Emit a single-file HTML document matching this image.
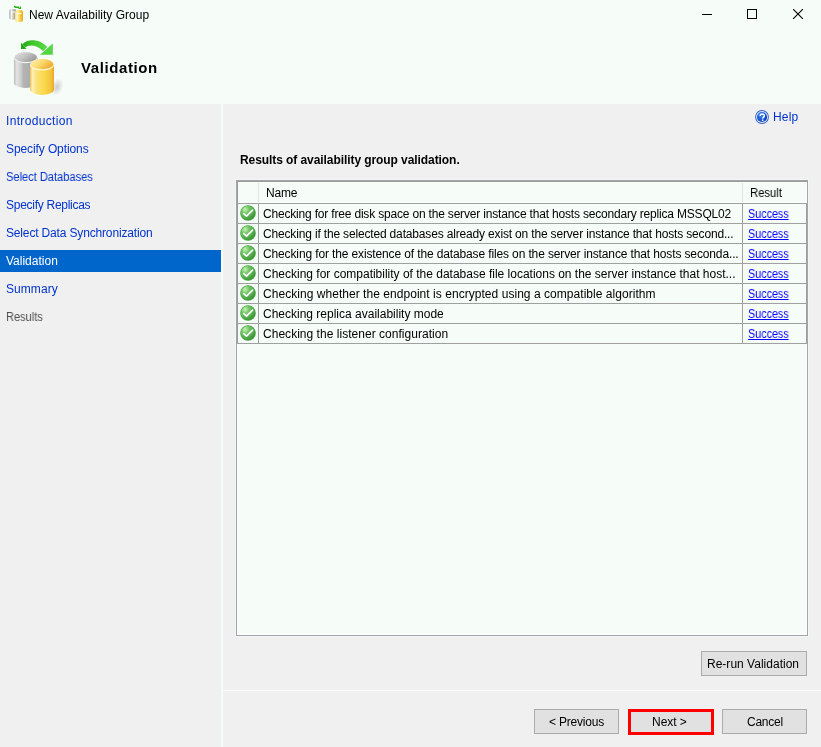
<!DOCTYPE html>
<html><head><meta charset="utf-8">
<style>
html,body{margin:0;padding:0;}
body{width:821px;height:747px;position:relative;overflow:hidden;background:#F0F0F0;font-family:"Liberation Sans",sans-serif;font-size:12px;color:#000;}
.a{position:absolute;}
.t{position:absolute;white-space:nowrap;line-height:14px;height:14px;will-change:transform;}
.btn{position:absolute;box-sizing:border-box;border:1px solid #A9ADAA;background:#E1E1E1;height:25px;}
</style></head><body>
<svg width="0" height="0" style="position:absolute">
<defs>
<radialGradient id="cg" cx="0.3" cy="0.25" r="0.8"><stop offset="0" stop-color="#c4f4b4"/><stop offset="0.35" stop-color="#74c668"/><stop offset="0.8" stop-color="#4da646"/><stop offset="1" stop-color="#3a9134"/></radialGradient>
<symbol id="chk" viewBox="0 0 16 16">
<circle cx="8" cy="8" r="7.8" fill="#4aa844"/>
<circle cx="8" cy="8" r="7.2" fill="url(#cg)"/>
<path d="M3.8 8.6 L6.5 11.2 L12.6 5.2" stroke="#fff" stroke-width="1.7" fill="none" stroke-linecap="round" stroke-linejoin="round"/>
</symbol>
</defs></svg>
<!-- header -->
<div class="a" style="left:0;top:0;width:821px;height:104px;background:#F6FCF7"></div>
<svg class="a" style="left:6px;top:4px" width="20" height="20" viewBox="0 0 20 20">
  <defs>
    <linearGradient id="sg" x1="0" x2="1"><stop offset="0" stop-color="#b8b8b8"/><stop offset="0.35" stop-color="#e6e6e6"/><stop offset="1" stop-color="#8a8a8a"/></linearGradient>
    <linearGradient id="sy" x1="0" x2="1"><stop offset="0" stop-color="#ffe070"/><stop offset="0.3" stop-color="#fff0b0"/><stop offset="0.7" stop-color="#f7cc40"/><stop offset="1" stop-color="#eea024"/></linearGradient>
  </defs>
  <path d="M8.3 2 L9.2 3.2 L13 3.2" stroke="#22b016" stroke-width="1.4" fill="none"/>
  <path d="M12 5 L15 2 L15 5 Z" fill="#22b016"/>
  <rect x="3" y="5" width="7.2" height="10.5" rx="2.2" fill="url(#sg)"/>
  <path d="M5.5 8 L9 8 M5.8 8 L5.8 14" stroke="#fafafa" stroke-width="1" fill="none"/>
  <rect x="9" y="6" width="8" height="12" rx="2.5" fill="url(#sy)"/>
  <path d="M10.5 9.5 L15.5 9.5 M11.3 9.5 L11.3 16" stroke="#fffbe0" stroke-width="1" fill="none"/>
</svg>
<div class="a" style="left:702px;top:14px;width:10px;height:1px;background:#000"></div>
<div class="a" style="left:747px;top:9px;width:8px;height:8px;border:1px solid #000"></div>
<svg class="a" style="left:793px;top:9px" width="10" height="10" viewBox="0 0 10 10"><path d="M0 0 L10 10 M10 0 L0 10" stroke="#000" stroke-width="1.1"/></svg>
<svg class="a" style="left:8px;top:36px" width="60" height="64" viewBox="0 0 60 64">
  <defs>
    <linearGradient id="gg" x1="0" x2="1"><stop offset="0" stop-color="#bdbdbd"/><stop offset="0.12" stop-color="#e4e4e4"/><stop offset="0.28" stop-color="#d0d0d0"/><stop offset="0.4" stop-color="#b4b4b4"/><stop offset="0.85" stop-color="#a8a8a8"/><stop offset="1" stop-color="#8c8c8c"/></linearGradient>
    <linearGradient id="ggt" x1="0" x2="1" y1="0" y2="0.6"><stop offset="0" stop-color="#e2e2e2"/><stop offset="0.5" stop-color="#c4c4c4"/><stop offset="1" stop-color="#9a9a9a"/></linearGradient>
    <linearGradient id="gy" x1="0" x2="1"><stop offset="0" stop-color="#f7c75a"/><stop offset="0.1" stop-color="#fff0b8"/><stop offset="0.25" stop-color="#fbe27a"/><stop offset="0.6" stop-color="#f9d848"/><stop offset="0.88" stop-color="#f4c23a"/><stop offset="1" stop-color="#eba52a"/></linearGradient>
    <linearGradient id="gyt" x1="0" x2="1" y1="0" y2="0.5"><stop offset="0" stop-color="#fff2b8"/><stop offset="0.55" stop-color="#fad868"/><stop offset="1" stop-color="#f0ac34"/></linearGradient>
    <linearGradient id="ga" x1="0" x2="1"><stop offset="0" stop-color="#22aa14"/><stop offset="0.5" stop-color="#44cc30"/><stop offset="1" stop-color="#5cd84a"/></linearGradient>
    <radialGradient id="sh" cx="0.5" cy="0.5" r="0.5"><stop offset="0" stop-color="#8a8a8a" stop-opacity="0.4"/><stop offset="1" stop-color="#8a8a8a" stop-opacity="0"/></radialGradient>
  </defs>
  <ellipse cx="49" cy="51" rx="6" ry="9" fill="url(#sh)" transform="rotate(20 49 51)"/>
  <path d="M5.9 21.7 L5.9 46.9 A11.85 5 0 0 0 29.6 46.9 L29.6 21.7 Z" fill="url(#gg)"/>
  <ellipse cx="17.75" cy="21.7" rx="11.85" ry="5.5" fill="#f4f4f4"/>
  <ellipse cx="17.75" cy="21.2" rx="11.2" ry="4.9" fill="url(#ggt)"/>
  <path d="M22.2 28.8 L22.2 53.2 A11.9 5.8 0 0 0 46 53.2 L46 28.8 Z" fill="url(#gy)"/>
  <ellipse cx="34.1" cy="28.8" rx="11.9" ry="5.8" fill="#fff6d0"/>
  <ellipse cx="34.1" cy="28.2" rx="11.2" ry="5.1" fill="url(#gyt)"/>
  <path d="M14.5 8.3 C19 3 31 2 39.3 11 L35 15.3 C30 9 21 7.8 17 11.4 Z" fill="url(#ga)"/>
  <path d="M13 6.5 L13 13 L18.3 13 Z" fill="#22aa14"/>
  <path d="M32 18.8 L44.8 18.8 L44.8 7.5 Z" fill="#55d544"/>
</svg>
<!-- left panel -->
<div class="a" style="left:0;top:250px;width:221px;height:22px;background:#0066CC"></div>
<div class="a" style="left:221px;top:104px;width:2px;height:643px;background:#F6FCF7"></div>
<div class="a" style="left:223px;top:690px;width:598px;height:1px;background:#F6FCF7"></div>
<!-- help icon -->
<svg class="a" style="left:755px;top:110px" width="14" height="14" viewBox="0 0 14 14">
  <defs><radialGradient id="hg" cx="0.35" cy="0.3" r="0.75"><stop offset="0" stop-color="#3f86f5"/><stop offset="0.6" stop-color="#1c5ad8"/><stop offset="1" stop-color="#0d3ca8"/></radialGradient></defs>
  <circle cx="7" cy="7" r="6.9" fill="#2f5fc4"/>
  <circle cx="7" cy="7" r="6.0" fill="#dfe9f8"/>
  <circle cx="7" cy="7" r="5.1" fill="url(#hg)"/>
  <path d="M5.2 5.9 C5.2 4.5 6.1 3.9 7.3 3.9 C8.5 3.9 9.3 4.7 9.3 5.7 C9.3 7.0 7.8 7.2 7.6 8.7" stroke="#fff" stroke-width="1.5" fill="none"/>
  <rect x="6.8" y="9.5" width="1.6" height="1.6" fill="#fff"/>
</svg>
<!-- table -->
<div class="a" style="left:235px;top:179px;width:574px;height:458px;background:#F5F5F5"></div>
<div class="a" style="left:236px;top:180px;width:572px;height:456px;background:#A2A6AA"></div>
<div class="a" style="left:237px;top:181px;width:570px;height:454px;background:#FDFEFD"></div>
<div class="a" style="left:238px;top:182px;width:568px;height:452px;background:#F6FCF7"></div>
<div class="a" style="left:237px;top:181px;width:570px;height:1px;background:#9A9C9A"></div>
<div class="a" style="left:238px;top:182px;width:568px;height:1px;background:#FBFEFB"></div>
<div class="a" style="left:238px;top:202px;width:568px;height:1px;background:#FCFEFC"></div>
<div class="a" style="left:237px;top:181px;width:1px;height:163px;background:#9A9C9A"></div>
<div class="a" style="left:258px;top:183px;width:1px;height:19px;background:#E0E4E1"></div>
<div class="a" style="left:742px;top:183px;width:1px;height:19px;background:#E0E4E1"></div>
<div class="a" style="left:237px;top:203px;width:570px;height:1px;background:#A0A0A0"></div>
<div class="a" style="left:237px;top:223px;width:570px;height:1px;background:#A0A0A0"></div>
<div class="a" style="left:237px;top:243px;width:570px;height:1px;background:#A0A0A0"></div>
<div class="a" style="left:237px;top:263px;width:570px;height:1px;background:#A0A0A0"></div>
<div class="a" style="left:237px;top:283px;width:570px;height:1px;background:#A0A0A0"></div>
<div class="a" style="left:237px;top:303px;width:570px;height:1px;background:#A0A0A0"></div>
<div class="a" style="left:237px;top:323px;width:570px;height:1px;background:#A0A0A0"></div>
<div class="a" style="left:237px;top:343px;width:570px;height:1px;background:#A0A0A0"></div>
<div class="a" style="left:258px;top:203px;width:1px;height:141px;background:#A0A0A0"></div>
<div class="a" style="left:742px;top:203px;width:1px;height:141px;background:#A0A0A0"></div>
<div class="a" style="left:806px;top:203px;width:1px;height:141px;background:#A0A0A0"></div>
<svg class="a" style="left:240px;top:205px" width="16" height="16"><use href="#chk"/></svg>
<svg class="a" style="left:240px;top:225px" width="16" height="16"><use href="#chk"/></svg>
<svg class="a" style="left:240px;top:245px" width="16" height="16"><use href="#chk"/></svg>
<svg class="a" style="left:240px;top:265px" width="16" height="16"><use href="#chk"/></svg>
<svg class="a" style="left:240px;top:285px" width="16" height="16"><use href="#chk"/></svg>
<svg class="a" style="left:240px;top:305px" width="16" height="16"><use href="#chk"/></svg>
<svg class="a" style="left:240px;top:325px" width="16" height="16"><use href="#chk"/></svg>
<!-- buttons -->
<div class="btn" style="left:701px;top:651px;width:106px;"></div>
<div class="btn" style="left:534px;top:709px;width:85px;"></div>
<div class="btn" style="left:628px;top:709px;width:85px;"></div>
<div class="a" style="left:628px;top:709px;width:80px;height:20px;border:3px solid #FF0000;"></div>
<div class="btn" style="left:722px;top:709px;width:85px;"></div>
<div class="t" style="left:29px;top:8px;color:#000;letter-spacing:0.014px;">New Availability Group</div>
<div class="t" style="left:81px;top:61px;color:#000;letter-spacing:0.589px;font-size:15px;font-weight:bold;">Validation</div>
<div class="t" style="left:6px;top:114px;color:#0033CC;letter-spacing:0.327px;">Introduction</div>
<div class="t" style="left:6px;top:142px;color:#0033CC;letter-spacing:-0.1px;">Specify Options</div>
<div class="t" style="left:6px;top:170px;color:#0033CC;transform:scaleX(0.9226);transform-origin:0 0;">Select Databases</div>
<div class="t" style="left:6px;top:198px;color:#0033CC;letter-spacing:-0.273px;">Specify Replicas</div>
<div class="t" style="left:6px;top:226px;color:#0033CC;letter-spacing:-0.158px;">Select Data Synchronization</div>
<div class="t" style="left:6px;top:254px;color:#FFFFFF;">Validation</div>
<div class="t" style="left:6px;top:282px;color:#0033CC;letter-spacing:0.067px;">Summary</div>
<div class="t" style="left:6px;top:310px;color:#4D4D4D;transform:scaleX(0.9179);transform-origin:0 0;">Results</div>
<div class="t" style="left:773px;top:110px;color:#0033CC;letter-spacing:0.2px;">Help</div>
<div class="t" style="left:240px;top:153px;color:#000;letter-spacing:-0.075px;font-weight:bold;">Results of availability group validation.</div>
<div class="t" style="left:266px;top:186px;color:#000;letter-spacing:-0.167px;">Name</div>
<div class="t" style="left:750px;top:186px;color:#000;transform:scaleX(0.9394);transform-origin:0 0;">Result</div>
<div class="t" style="left:263px;top:207px;color:#000;letter-spacing:-0.184px;">Checking for free disk space on the server instance that hosts secondary replica MSSQL02</div>
<div class="t" style="left:748px;top:207px;color:#0000FF;transform:scaleX(0.8977);transform-origin:0 0;text-decoration:underline;">Success</div>
<div class="t" style="left:263px;top:227px;color:#000;letter-spacing:-0.165px;">Checking if the selected databases already exist on the server instance that hosts second...</div>
<div class="t" style="left:748px;top:227px;color:#0000FF;transform:scaleX(0.8977);transform-origin:0 0;text-decoration:underline;">Success</div>
<div class="t" style="left:263px;top:247px;color:#000;letter-spacing:-0.13px;">Checking for the existence of the database files on the server instance that hosts seconda...</div>
<div class="t" style="left:748px;top:247px;color:#0000FF;transform:scaleX(0.8977);transform-origin:0 0;text-decoration:underline;">Success</div>
<div class="t" style="left:263px;top:267px;color:#000;letter-spacing:-0.005px;">Checking for compatibility of the database file locations on the server instance that host...</div>
<div class="t" style="left:748px;top:267px;color:#0000FF;transform:scaleX(0.8977);transform-origin:0 0;text-decoration:underline;">Success</div>
<div class="t" style="left:263px;top:287px;color:#000;letter-spacing:0.043px;">Checking whether the endpoint is encrypted using a compatible algorithm</div>
<div class="t" style="left:748px;top:287px;color:#0000FF;transform:scaleX(0.8977);transform-origin:0 0;text-decoration:underline;">Success</div>
<div class="t" style="left:263px;top:307px;color:#000;">Checking replica availability mode</div>
<div class="t" style="left:748px;top:307px;color:#0000FF;transform:scaleX(0.8977);transform-origin:0 0;text-decoration:underline;">Success</div>
<div class="t" style="left:263px;top:327px;color:#000;letter-spacing:0.029px;">Checking the listener configuration</div>
<div class="t" style="left:748px;top:327px;color:#0000FF;transform:scaleX(0.8977);transform-origin:0 0;text-decoration:underline;">Success</div>
<div class="t" style="left:707px;top:657px;color:#000;letter-spacing:0.013px;">Re-run Validation</div>
<div class="t" style="left:549px;top:715px;color:#000;letter-spacing:-0.2px;">&lt; Previous</div>
<div class="t" style="left:652px;top:715px;color:#000;letter-spacing:-0.04px;">Next &gt;</div>
<div class="t" style="left:747px;top:715px;color:#000;letter-spacing:-0.26px;">Cancel</div>
</body></html>
